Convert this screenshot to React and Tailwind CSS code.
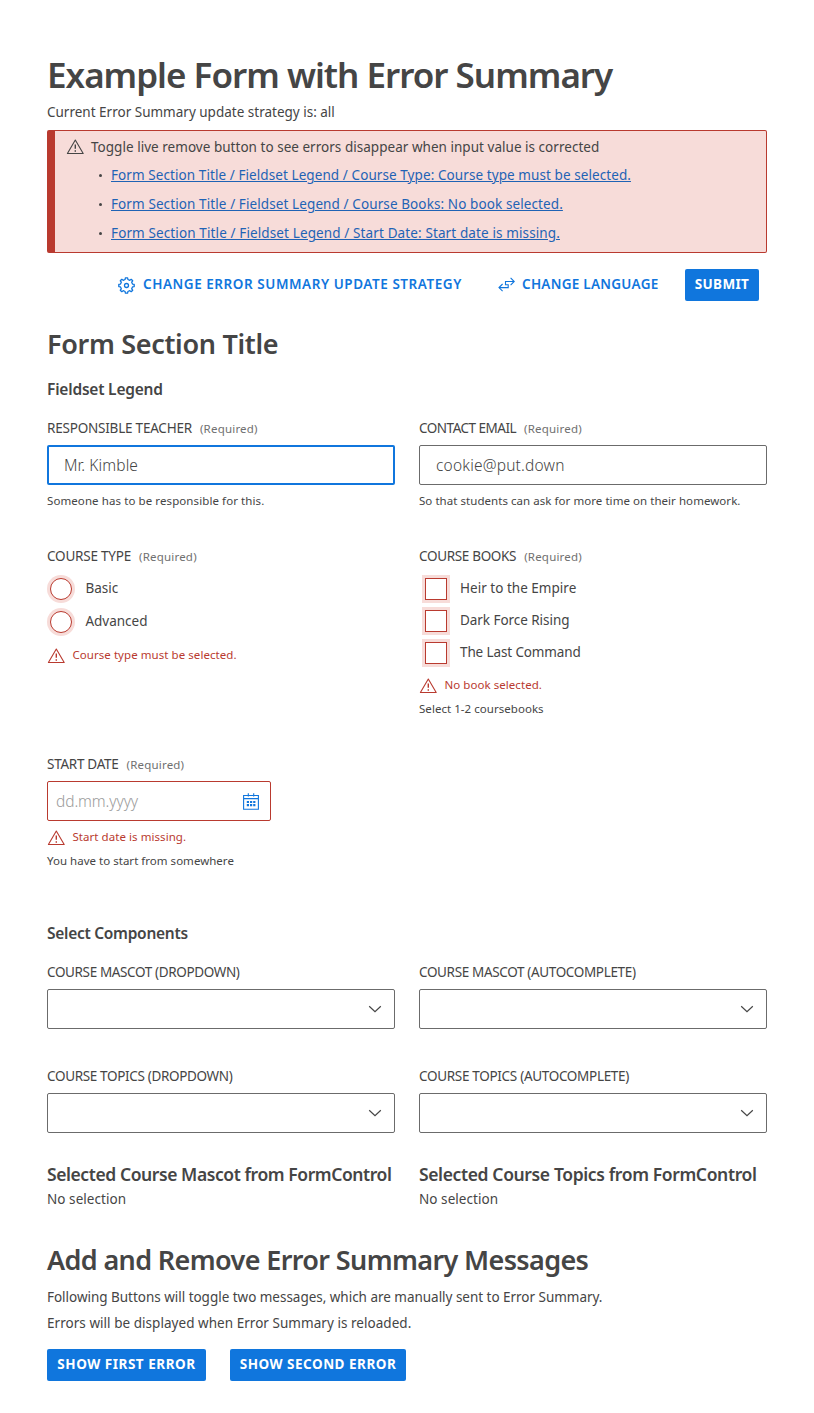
function WarningIcon({ className = "" }) {
  return (
    <svg className={`shrink-0 ${className}`} width="18" height="16" viewBox="0 0 18 16" fill="none" stroke="currentColor" strokeWidth="1.1" strokeLinejoin="round">
      <path d="M9.3 1 17.2 14.5H1.4Z" />
      <path d="M9.3 5.500v4.300" strokeWidth="1.4" />
      <path d="M9.3 11.200v1.500" strokeWidth="1.4" />
    </svg>
  );
}

function GearIcon() {
  return (
    <svg className="shrink-0" width="17" height="17" viewBox="0 0 17 17" fill="none" stroke="currentColor" strokeWidth="1.3" strokeLinejoin="round">
      <path d="M7.1 2.5 7.4.8H9.6L9.9 2.5 11.8 3.3 13.2 2.3 14.7 3.8 13.7 5.2 14.5 7.1 16.2 7.4V9.6L14.5 9.9 13.7 11.8 14.7 13.2 13.2 14.7 11.8 13.7 9.9 14.5 9.6 16.2H7.4L7.1 14.5 5.2 13.7 3.8 14.7 2.3 13.2 3.3 11.8 2.5 9.9.8 9.6V7.4L2.5 7.1 3.3 5.2 2.3 3.8 3.8 2.3 5.2 3.3Z" />
      <circle cx="8.5" cy="8.5" r="2" />
    </svg>
  );
}

function SwapIcon() {
  return (
    <svg className="shrink-0 -translate-y-px" width="17" height="15" viewBox="0 0 17 15" fill="none" stroke="currentColor" strokeWidth="1.1">
      <path d="M16 4.500H7.500v3.200h2.700v2.900H1" />
      <path d="M12.600.900 16.200 4.500 12.600 8.100M4.600 7 1 10.600l3.600 3.600" />
    </svg>
  );
}

function CalendarIcon() {
  return (
    <svg width="16" height="17" viewBox="0 0 16 17" fill="none" stroke="currentColor" strokeWidth="1.1">
      <path d="M.6 2.500H15.400V16.300H.6ZM.6 5.600H15.400M5.300.2V3.600M10.700.2V3.600" />
      <path d="M3.800 9H12.400M3.800 12.100H12.400" strokeWidth="2.100" strokeDasharray="2.200 1" />
    </svg>
  );
}

function ChevronIcon() {
  return (
    <svg width="14" height="8" viewBox="0 0 14 8" fill="none" stroke="currentColor" strokeWidth="1.2">
      <path d="M1.200 1.200 7 6.700l5.800-5.500" />
    </svg>
  );
}

function Label({ children, required, tracking = "tracking-[-0.21px]" }) {
  return (
    <div className="flex h-5 items-center gap-2 whitespace-nowrap">
      <span className={`text-[13.5px] ${tracking}`}>{children}</span>
      {required && <span className="pt-px text-[11.5px] tracking-[0.2px] text-[#707070]">(Required)</span>}
    </div>
  );
}

function Hint({ children, className = "mt-1.5", tracking = "tracking-[0.06px]" }) {
  return <p className={`h-5 text-[11.5px] leading-5 whitespace-nowrap ${tracking} ${className}`}>{children}</p>;
}

function FieldError({ children, className = "" }) {
  return (
    <div className={`flex h-5 items-center gap-[7px] pl-[0.4px] text-[#b93a2f] ${className}`}>
      <WarningIcon className="translate-y-px" />
      <span className="text-[11.5px] tracking-[0.06px] whitespace-nowrap">{children}</span>
    </div>
  );
}

function Radio({ label }) {
  return (
    <label className="flex h-7 items-center gap-[10px] pl-[0.4px]">
      <span className="flex size-7 items-center justify-center rounded-full bg-[#f7dcd9]">
        <span className="size-[22px] rounded-full border border-[#b93a2f] bg-white" />
      </span>
      <span className="-translate-y-px">{label}</span>
    </label>
  );
}

function Checkbox({ label, tracking = "" }) {
  return (
    <label className="flex h-7 items-center gap-[10px]">
      <span className="flex size-7 items-center justify-center bg-[#f7dcd9]">
        <span className="size-[22px] border border-[#b93a2f] bg-white" />
      </span>
      <span className={`-translate-y-px ${tracking}`}>{label}</span>
    </label>
  );
}

function SelectField({ label, tracking }) {
  return (
    <div>
      <Label tracking={tracking}>{label}</Label>
      <div className="mt-[7px] flex h-10 items-center justify-end rounded-[2px] border border-[#6b6b6b] pr-3">
        <ChevronIcon />
      </div>
    </div>
  );
}

function Button({ children, className }) {
  return (
    <button className={`flex h-8 items-center justify-center rounded-[2px] bg-[#1076dd] pb-px font-bold whitespace-nowrap text-white ${className}`}>
      {children}
    </button>
  );
}

const errors = [
  { text: "Form Section Title / Fieldset Legend / Course Type: Course type must be selected.", tracking: "tracking-[0.08px]" },
  { text: "Form Section Title / Fieldset Legend / Course Books: No book selected.", tracking: "tracking-[0.1px]" },
  { text: "Form Section Title / Fieldset Legend / Start Date: Start date is missing.", tracking: "tracking-[0.12px]" },
];

export default function App() {
  return (
    <main className="h-[1413px] w-[814px] bg-white pt-[51px] pr-[47px] pl-[47px] font-['Noto_Sans',sans-serif] text-[13.5px] text-[#454545]">
      <h1 className="h-12 text-[35px] leading-12 font-[570] tracking-[-1px] whitespace-nowrap">Example Form with Error Summary</h1>
      <p className="mt-[3px] h-5 leading-5">Current Error Summary update strategy is: all</p>

      <section className="mt-2 h-[123px] rounded-[2px] border border-l-8 border-[#b93a2f] bg-[#f7dcd9] pt-0.5 pl-[11px]">
        <div className="flex h-7 items-center gap-[7px]">
          <WarningIcon />
          <span className="tracking-[0.03px]">Toggle live remove button to see errors disappear when input value is corrected</span>
        </div>
        <ul>
          {errors.map(({ text, tracking }) => (
            <li key={text} className="flex h-[29px] items-center gap-[9px] pl-[33px]">
              <span className="size-[3px] rounded-full bg-[#454545]" />
              <a className={`text-[#1f63b5] underline decoration-1 underline-offset-1 ${tracking}`} href="#form">{text}</a>
            </li>
          ))}
        </ul>
      </section>

      <div className="mt-4 flex h-8 items-center pl-[71px] font-[570] text-[#1076dd]">
        <button className="flex items-center gap-2 whitespace-nowrap">
          <GearIcon />
          <span className="w-[320px] -translate-y-px text-left tracking-[0.55px]">CHANGE ERROR SUMMARY UPDATE STRATEGY</span>
        </button>
        <button className="ml-[35px] flex items-center gap-[7px] whitespace-nowrap">
          <SwapIcon />
          <span className="w-[137px] -translate-y-px text-left tracking-[0.27px]">CHANGE LANGUAGE</span>
        </button>
        <Button className="ml-[26px] w-[74px] tracking-[0.35px]">SUBMIT</Button>
      </div>

      <h2 className="mt-[23px] h-10 text-[27px] leading-10 font-[570] tracking-[-0.32px]">Form Section Title</h2>
      <h3 className="mt-[13px] h-6 text-[15.5px] leading-6 font-semibold tracking-[-0.2px]">Fieldset Legend</h3>

      <div id="form" className="mt-[17px] grid grid-cols-2 gap-x-6 gap-y-[35px]">
        <div>
          <Label required>RESPONSIBLE TEACHER</Label>
          <div className="mt-[7px] flex h-10 items-center rounded-[2px] border-2 border-[#1076dd] pt-0.5 pl-[15px] text-[15.5px] font-light tracking-[0.1px]">Mr. Kimble</div>
          <Hint tracking="tracking-[0.09px]">Someone has to be responsible for this.</Hint>
        </div>
        <div>
          <Label required tracking="tracking-[-0.5px]">CONTACT EMAIL</Label>
          <div className="mt-[7px] flex h-10 items-center rounded-[2px] border border-[#6b6b6b] pt-0.5 pl-4 text-[15.5px] font-light tracking-[0.2px]">cookie@put.down</div>
          <Hint tracking="tracking-[0.05px]">So that students can ask for more time on their homework.</Hint>
        </div>
        <div>
          <Label required>COURSE TYPE</Label>
          <div className="mt-[9px] flex flex-col gap-[5px]">
            <Radio label="Basic" />
            <Radio label="Advanced" />
          </div>
          <FieldError className="mt-[9px]">Course type must be selected.</FieldError>
        </div>
        <div>
          <Label required tracking="tracking-[-0.33px]">COURSE BOOKS</Label>
          <div className="mt-[9px] flex flex-col gap-1 pl-[3px]">
            <Checkbox label="Heir to the Empire" tracking="tracking-[0.02px]" />
            <Checkbox label="Dark Force Rising" tracking="tracking-[-0.05px]" />
            <Checkbox label="The Last Command" tracking="tracking-[-0.12px]" />
          </div>
          <FieldError className="mt-2">No book selected.</FieldError>
          <Hint className="mt-1" tracking="tracking-[0.04px]">Select 1-2 coursebooks</Hint>
        </div>
        <div>
          <Label required tracking="tracking-[-0.28px]">START DATE</Label>
          <div className="mt-[7px] flex h-10 w-56 items-center justify-between rounded-[2px] border border-[#b93a2f] pr-[11px] pl-2">
            <span className="pt-0.5 text-[15.5px] font-light tracking-[-0.09px] text-[#9b9b9b]">dd.mm.yyyy</span>
            <span className="text-[#1076dd]"><CalendarIcon /></span>
          </div>
          <FieldError className="mt-1.5">Start date is missing.</FieldError>
          <Hint className="mt-1" tracking="tracking-[0.02px]">You have to start from somewhere</Hint>
        </div>
      </div>

      <h3 className="mt-[50px] h-6 text-[15.5px] leading-6 font-semibold tracking-[-0.28px]">Select Components</h3>
      <div className="mt-[17px] grid grid-cols-2 gap-x-6 gap-y-[37px]">
        <SelectField label="COURSE MASCOT (DROPDOWN)" tracking="tracking-[-0.37px]" />
        <SelectField label="COURSE MASCOT (AUTOCOMPLETE)" tracking="tracking-[-0.35px]" />
        <SelectField label="COURSE TOPICS (DROPDOWN)" tracking="tracking-[-0.34px]" />
        <SelectField label="COURSE TOPICS (AUTOCOMPLETE)" tracking="tracking-[-0.31px]" />
      </div>

      <div className="mt-[29px] grid grid-cols-2 gap-x-6">
        <div>
          <h4 className="h-6 text-[17.5px] leading-6 font-[570] tracking-[-0.42px] whitespace-nowrap">Selected Course Mascot from FormControl</h4>
          <p className="mt-[3px] h-5 leading-5 tracking-[0.06px]">No selection</p>
        </div>
        <div>
          <h4 className="h-6 text-[17.5px] leading-6 font-[570] tracking-[-0.37px] whitespace-nowrap">Selected Course Topics from FormControl</h4>
          <p className="mt-[3px] h-5 leading-5 tracking-[0.06px]">No selection</p>
        </div>
      </div>

      <h2 className="mt-[31px] h-10 text-[27px] leading-10 font-[570] tracking-[-0.63px] whitespace-nowrap">Add and Remove Error Summary Messages</h2>
      <p className="mt-1 h-[26px] leading-[26px] tracking-[-0.025px] whitespace-nowrap">Following Buttons will toggle two messages, which are manually sent to Error Summary.</p>
      <p className="h-[26px] leading-[26px] tracking-[0.04px] whitespace-nowrap">Errors will be displayed when Error Summary is reloaded.</p>

      <div className="mt-[13px] flex gap-6">
        <Button className="w-[159px] tracking-[0.52px]">SHOW FIRST ERROR</Button>
        <Button className="w-44 tracking-[0.5px]">SHOW SECOND ERROR</Button>
      </div>
    </main>
  );
}
